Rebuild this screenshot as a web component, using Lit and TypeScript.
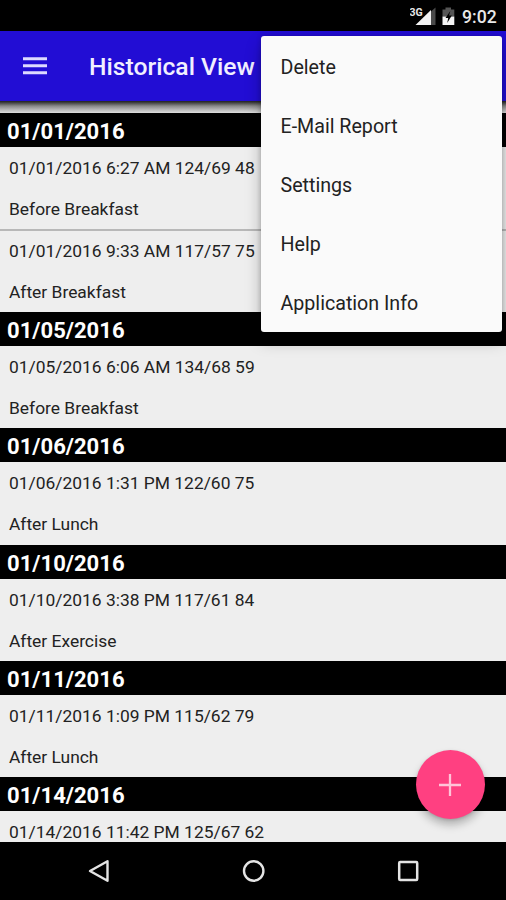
import { LitElement, html, css, svg } from "lit";
import { customElement } from "lit/decorators.js";

interface Reading {
  line: string;
  note: string;
}
interface Day {
  date: string;
  readings: Reading[];
}

const DAYS: Day[] = [
  {
    date: "01/01/2016",
    readings: [
      { line: "01/01/2016 6:27 AM 124/69 48", note: "Before Breakfast" },
      { line: "01/01/2016 9:33 AM 117/57 75", note: "After Breakfast" },
    ],
  },
  { date: "01/05/2016", readings: [{ line: "01/05/2016 6:06 AM 134/68 59", note: "Before Breakfast" }] },
  { date: "01/06/2016", readings: [{ line: "01/06/2016 1:31 PM 122/60 75", note: "After Lunch" }] },
  { date: "01/10/2016", readings: [{ line: "01/10/2016 3:38 PM 117/61 84", note: "After Exercise" }] },
  { date: "01/11/2016", readings: [{ line: "01/11/2016 1:09 PM 115/62 79", note: "After Lunch" }] },
  { date: "01/14/2016", readings: [{ line: "01/14/2016 11:42 PM 125/67 62", note: "" }] },
];

const MENU = ["Delete", "E-Mail Report", "Settings", "Help", "Application Info"];

@customElement("app-root")
export class AppRoot extends LitElement {
  static styles = css`
    :host {
      display: flex;
      flex-direction: column;
      position: relative;
      width: 506px;
      height: 900px;
      overflow: hidden;
      background: #eee;
      font-family: Roboto, "Liberation Sans", sans-serif;
      color: #222;
    }
    svg {
      display: block;
    }
    .status {
      flex: none;
      height: 31px;
      background: #000;
      color: #e8e8e8;
      display: flex;
      align-items: center;
      justify-content: flex-end;
      padding-right: 9px;
      box-sizing: border-box;
    }
    .clock {
      font-size: 17.6px;
      font-weight: 500;
      line-height: 31px;
      padding-top: 3px;
      width: 35px;
      margin-left: 6px;
      white-space: nowrap;
    }
    .bar {
      flex: none;
      height: 70px;
      background: #220dd4;
      display: flex;
      align-items: center;
      padding-left: 23px;
    }
    .title {
      margin-left: 42px;
      color: #f1efff;
      font-size: 24.7px;
      font-weight: 500;
      line-height: 30px;
      padding-top: 2px;
      white-space: nowrap;
    }
    .shade {
      flex: none;
      height: 12px;
      background: linear-gradient(#222 0, #3c3c3c 12%, #8a8a8a 42%, #bcbcbc 75%, #dedede 100%);
    }
    .list {
      flex: 1;
      min-height: 0;
      overflow: hidden;
    }
    .day {
      height: 34px;
      box-sizing: border-box;
      background: #000;
      color: #fff;
      font-size: 22.05px;
      font-weight: 700;
      line-height: 38px;
      padding-left: 7px;
    }
    .row {
      height: 82.4px;
      box-sizing: border-box;
      padding: 9px 9px 0;
      font-size: 17.42px;
      line-height: 24px;
      white-space: nowrap;
    }
    .row + .row {
      border-top: 2px solid #b8b8b8;
      padding-top: 7.6px;
    }
    .note {
      margin-top: 17px;
    }
    .nav {
      flex: none;
      height: 58px;
      background: #000;
      display: flex;
      justify-content: space-between;
      align-items: center;
      padding: 0 86px;
      box-sizing: border-box;
    }
    .menu {
      position: absolute;
      z-index: 2;
      left: 261px;
      top: 36px;
      width: 241px;
      height: 296px;
      box-sizing: border-box;
      border-radius: 3px;
      background: #fafafa;
      box-shadow: 0 9px 16px rgba(0, 0, 0, 0.26), 0 0 5px rgba(0, 0, 0, 0.22);
      padding: 2px 0 0 19.5px;
    }
    .item {
      height: 59.1px;
      line-height: 60px;
      font-size: 19.65px;
      white-space: nowrap;
    }
    .fab {
      position: absolute;
      z-index: 2;
      left: 415.5px;
      top: 750px;
      width: 69px;
      height: 69px;
      border-radius: 50%;
      background: #ff4081;
      display: grid;
      place-items: center;
      box-shadow: 0 6px 8px rgba(0, 0, 0, 0.25), 0 1px 3px rgba(0, 0, 0, 0.14);
    }
  `;

  private statusIcons() {
    return svg`
      <svg width="46" height="31" viewBox="0 0 46 31">
        <path d="M25.5 7.5V25H21V11.5z" fill="#4a4a4a"></path>
        <path d="M21 10V25H5.5z" fill="#f2f2f2"></path>
        <text x="-0.5" y="16" font-family="Roboto, sans-serif" font-size="10.5" font-weight="700" fill="#e8e8e8" stroke="#000" stroke-width="1.5" paint-order="stroke">3G</text>
        <path d="M35.5 7.5h5.5v2h3.3V16.5H32.5V9.5h3z" fill="#555"></path>
        <path d="M32.5 16.5H44.3V25H32.5z" fill="#f4f4f4"></path>
        <path d="M40.3 11L35.5 18H38.2L37.2 23L41.8 15.5H39z" fill="#000"></path>
      </svg>`;
  }

  render() {
    return html`
      <div class="status">${this.statusIcons()}<span class="clock">9:02</span></div>
      <div class="bar">
        <svg width="24" height="20" viewBox="0 0 24 20">
          <path d="M0 2.7H24M0 9.7H24M0 16.7H24" stroke="#dedaff" stroke-width="3"></path>
        </svg>
        <span class="title">Historical View</span>
      </div>
      <div class="shade"></div>
      <div class="list">
        ${DAYS.map(
          (d) => html`
            <div class="day">${d.date}</div>
            ${d.readings.map(
              (r) => html`<div class="row"><div>${r.line}</div>${r.note ? html`<div class="note">${r.note}</div>` : ""}</div>`
            )}
          `
        )}
      </div>
      <div class="nav">
        <svg width="25" height="26" viewBox="0 0 25 26">
          <path d="M21.5 3.2V22.8L4 13z" fill="none" stroke="#e4e4e4" stroke-width="2.4" stroke-linejoin="round"></path>
        </svg>
        <svg width="26" height="26" viewBox="0 0 26 26">
          <circle cx="12.7" cy="13" r="9.7" fill="none" stroke="#e4e4e4" stroke-width="2.4"></circle>
        </svg>
        <svg width="24" height="26" viewBox="0 0 24 26">
          <rect x="3.2" y="4" width="18" height="18" rx="1" fill="none" stroke="#e4e4e4" stroke-width="2.5"></rect>
        </svg>
      </div>
      <div class="menu">${MENU.map((m) => html`<div class="item">${m}</div>`)}</div>
      <div class="fab">
        <svg width="24" height="24" viewBox="0 0 24 24">
          <path d="M12 1V23M1 12H23" stroke="#ffc4d8" stroke-width="2.3"></path>
        </svg>
      </div>
    `;
  }
}
